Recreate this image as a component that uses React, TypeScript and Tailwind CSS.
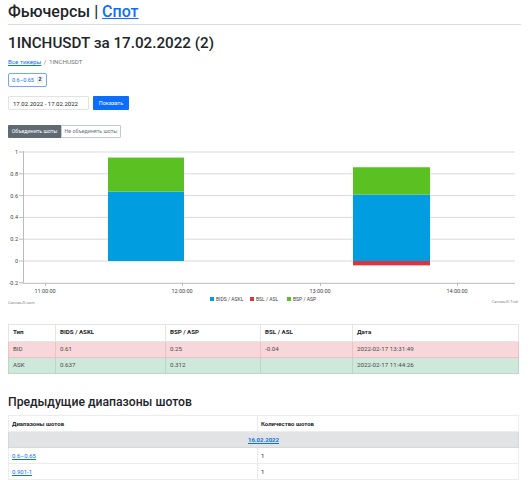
import React from 'react';

const FONT = { fontFamily: 'Roboto, "Noto Sans", sans-serif' };

const yOf = (v: number) => 118 - v * 109; // 0 → 118 in svg coords (page y 261)

const bars = [
  { x0: 100, x1: 176, blue: 0.637, green: 0.312, red: 0 },
  { x0: 345, x1: 422, blue: 0.61, green: 0.25, red: -0.04 },
];

const Chart: React.FC = () => {
  const ticks = [1, 0.8, 0.6, 0.4, 0.2, 0, -0.2];
  const xLabels = [
    { x: 37, t: '11:00:00' },
    { x: 174, t: '12:00:00' },
    { x: 312, t: '13:00:00' },
    { x: 449, t: '14:00:00' },
  ];
  return (
    <svg width={512} height={170} className="block" style={FONT}>
      {ticks.map(t => (
        <g key={t}>
          {t !== -0.2 && <line x1={15} x2={507} y1={yOf(t)} y2={yOf(t)} stroke="#d9d9d9" strokeWidth={1} />}
          <line x1={11} x2={15} y1={yOf(t)} y2={yOf(t)} stroke="#bbb" strokeWidth={1} />
          <text x={10} y={yOf(t) + 2} fontSize={5.5} textAnchor="end" fill="#444">{t === -0.2 ? '-0.2' : String(t)}</text>
        </g>
      ))}
      {bars.map((b, i) => (
        <g key={i}>
          <rect x={b.x0} width={b.x1 - b.x0} y={yOf(b.blue)} height={yOf(0) - yOf(b.blue)} fill="#009de0" />
          <rect x={b.x0} width={b.x1 - b.x0} y={yOf(b.blue + b.green)} height={yOf(b.blue) - yOf(b.blue + b.green)} fill="#5bc022" />
          {b.red < 0 && <rect x={b.x0} width={b.x1 - b.x0} y={yOf(0)} height={yOf(b.red) - yOf(0)} fill="#e0323c" />}
        </g>
      ))}
      <line x1={15.5} x2={15.5} y1={yOf(1) - 1} y2={yOf(-0.2)} stroke="#bbb" strokeWidth={1} />
      <line x1={15} x2={507} y1={yOf(-0.2) + 0.5} y2={yOf(-0.2) + 0.5} stroke="#bbb" strokeWidth={1} />
      {xLabels.map(l => (
        <g key={l.t}>
          <line x1={l.x + 0.5} x2={l.x + 0.5} y1={yOf(-0.2)} y2={yOf(-0.2) + 3} stroke="#bbb" />
          <text x={l.x} y={yOf(-0.2) + 10} fontSize={5.5} textAnchor="middle" fill="#444">{l.t}</text>
        </g>
      ))}
      <text x={0} y={161} fontSize={4} fill="#888">CanvasJS.com</text>
      <text x={510} y={160} fontSize={4} fill="#888" textAnchor="end">CanvasJS Trial</text>
      <g fontSize={5} fill="#444">
        <rect x={202} y={154} width={4} height={4} fill="#009de0" />
        <text x={208} y={158}>BIDS / ASKL</text>
        <rect x={242} y={154} width={4} height={4} fill="#e0323c" />
        <text x={248} y={158}>BSL / ASL</text>
        <rect x={279} y={154} width={4} height={4} fill="#5bc022" />
        <text x={285} y={158}>BSP / ASP</text>
      </g>
    </svg>
  );
};

export default function App() {
  return (
    <div className="bg-white w-[531px] h-[480px] overflow-hidden px-2 text-[#212529]" style={FONT}>
      <h1 className="h-[24px] text-[16px] leading-[24px] font-medium whitespace-nowrap">
        Фьючерсы | <a className="text-[#0d6efd] underline">Спот</a>
      </h1>
      <div className="border-t border-[#dcdcdc] mr-[2px]" />
      <h2 className="h-[24px] text-[15.2px] leading-[24px] font-medium mt-[6px] whitespace-nowrap">1INCHUSDT за 17.02.2022 (2)</h2>
      <div className="h-[10px] text-[6.2px] leading-[10px] mt-[2px] text-[#6c757d] whitespace-nowrap">
        <a className="text-[#0d6efd] underline">Все тикеры</a> <span className="mx-[1px]">/</span> 1INCHUSDT
      </div>
      <div className="mt-[6px] flex">
        <span className="inline-flex items-center gap-[3px] h-[14px] px-[3px] border border-[#0d6efd]/60 rounded-[2px] text-[5.5px] text-[#0d6efd] whitespace-nowrap">
          0.6–0.65
          <span className="bg-[#eef1f4] text-[#212529] rounded-[1px] px-[1.5px] text-[5px] font-bold">2</span>
        </span>
      </div>
      <div className="mt-[9px] flex gap-[4px]">
        <div className="w-[81px] h-[14px] border border-[#e3e3e3] rounded-[1px] text-[6px] flex items-center px-[4px] whitespace-nowrap">17.02.2022 - 17.02.2022</div>
        <div className="h-[14px] w-[36px] bg-[#0d6efd] text-white text-[5.5px] rounded-[1px] flex items-center justify-center">Показать</div>
      </div>
      <div className="mt-[15px] flex">
        <div className="h-[13px] w-[53px] bg-[#5f6a72] text-white text-[5.3px] flex items-center justify-center rounded-l-[1px] whitespace-nowrap">Объединить шоты</div>
        <div className="h-[13px] w-[60px] border border-[#c5c9cc] text-[#6c757d] text-[5.3px] flex items-center justify-center rounded-r-[1px] whitespace-nowrap">Не объединять шоты</div>
      </div>
      <div className="mt-[5px]">
        <Chart />
      </div>
      <table className="mt-[11px] w-[511px] border-collapse text-[6.2px]">
        <thead>
          <tr className="h-[17px] font-bold text-left">
            <th className="border border-[#e5e5e5] px-[4px] w-[47px]">Тип</th>
            <th className="border border-[#e5e5e5] px-[4px] w-[110px]">BIDS / ASKL</th>
            <th className="border border-[#e5e5e5] px-[4px] w-[95px]">BSP / ASP</th>
            <th className="border border-[#e5e5e5] px-[4px] w-[92px]">BSL / ASL</th>
            <th className="border border-[#e5e5e5] px-[4px]">Дата</th>
          </tr>
        </thead>
        <tbody>
          <tr className="h-[16px] bg-[#f8d7da] text-[#4a4a4a]">
            <td className="border border-[#e8c4c7] px-[4px]">BID</td>
            <td className="border border-[#e8c4c7] px-[4px]">0.61</td>
            <td className="border border-[#e8c4c7] px-[4px]">0.25</td>
            <td className="border border-[#e8c4c7] px-[4px]">-0.04</td>
            <td className="border border-[#e8c4c7] px-[4px]">2022-02-17 13:31:49</td>
          </tr>
          <tr className="h-[16px] bg-[#cfe8dc] text-[#4a4a4a]">
            <td className="border border-[#bcd6ca] px-[4px]">ASK</td>
            <td className="border border-[#bcd6ca] px-[4px]">0.637</td>
            <td className="border border-[#bcd6ca] px-[4px]">0.312</td>
            <td className="border border-[#bcd6ca] px-[4px]"></td>
            <td className="border border-[#bcd6ca] px-[4px]">2022-02-17 11:44:26</td>
          </tr>
        </tbody>
      </table>
      <h3 className="h-[20px] text-[12.2px] leading-[20px] font-medium mt-[18px] whitespace-nowrap">Предыдущие диапазоны шотов</h3>
      <table className="mt-[3px] w-[511px] border-collapse text-[6px]">
        <thead>
          <tr className="h-[16px] font-bold text-left">
            <th className="border border-[#ececec] px-[3px] w-[249px]">Диапазоны шотов</th>
            <th className="border border-[#ececec] px-[3px]">Количество шотов</th>
          </tr>
        </thead>
        <tbody>
          <tr className="h-[16px] bg-[#e2e3e5]">
            <td colSpan={2} className="border border-[#d6d7d9] text-center font-bold">
              <a className="text-[#0d6efd] underline">16.02.2022</a>
            </td>
          </tr>
          <tr className="h-[16px]">
            <td className="border border-[#ececec] px-[3px]"><a className="text-[#0d6efd] underline">0.6–0.65</a></td>
            <td className="border border-[#ececec] px-[3px]">1</td>
          </tr>
          <tr className="h-[16px]">
            <td className="border border-[#ececec] px-[3px]"><a className="text-[#0d6efd] underline">0.901-1</a></td>
            <td className="border border-[#ececec] px-[3px]">1</td>
          </tr>
        </tbody>
      </table>
    </div>
  );
}
